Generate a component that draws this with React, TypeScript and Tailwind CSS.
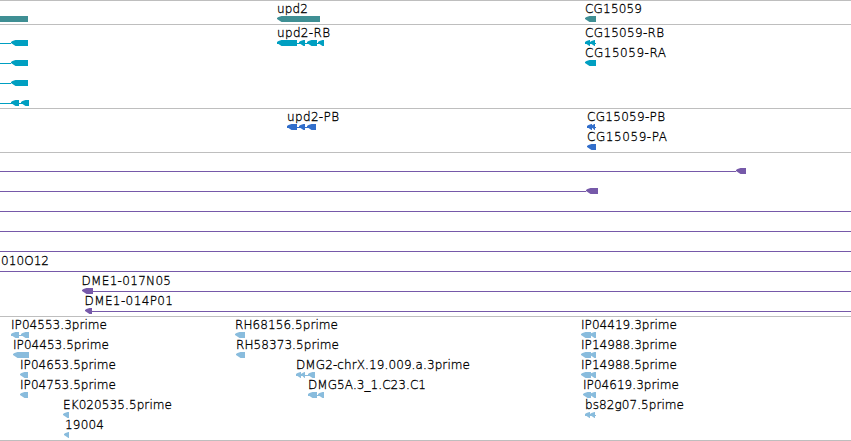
interface Feature {
  row: number
  // exons as [start, end] pairs, every one of them points left
  exons: [number, number][]
  label?: string
  labelX?: number
  labelWidth?: number
  line?: [number, number]
}

interface Track {
  id: string
  color: string
  rows: number
  features: Feature[]
}

const ROW_HEIGHT = 20
const VIEW_WIDTH = 851

const tracks: Track[] = [
  {
    id: 'gene',
    color: '#3f8f94',
    rows: 1,
    features: [
      { row: 0, exons: [[-20, 28]] },
      { row: 0, exons: [[277, 320]], label: 'upd2', labelX: 277, labelWidth: 31 },
      { row: 0, exons: [[585, 596]], label: 'CG15059', labelX: 585, labelWidth: 57 },
    ],
  },
  {
    id: 'mrna',
    color: '#009fc1',
    rows: 4,
    features: [
      { row: 0, exons: [[11, 28]], line: [0, 11] },
      { row: 1, exons: [[11, 28]], line: [0, 11] },
      { row: 2, exons: [[11, 28]], line: [0, 11] },
      { row: 3, exons: [[11, 19], [21, 29]], line: [0, 29] },
      { row: 0, exons: [[277, 297], [299, 305], [307, 317], [318, 324]], line: [277, 324], label: 'upd2-RB', labelX: 277, labelWidth: 53 },
      { row: 0, exons: [[585, 590], [590, 595]], line: [585, 596], label: 'CG15059-RB', labelX: 585, labelWidth: 79 },
      { row: 1, exons: [[585, 596]], label: 'CG15059-RA', labelX: 585, labelWidth: 81 },
    ],
  },
  {
    id: 'cds',
    color: '#316ecb',
    rows: 2,
    features: [
      { row: 0, exons: [[287, 297], [299, 305], [307, 316]], line: [287, 316], label: 'upd2-PB', labelX: 287, labelWidth: 52 },
      { row: 0, exons: [[587, 592], [591, 595]], line: [587, 596], label: 'CG15059-PB', labelX: 587, labelWidth: 78 },
      { row: 1, exons: [[587, 596]], label: 'CG15059-PA', labelX: 587, labelWidth: 80 },
    ],
  },
  {
    id: 'bac',
    color: '#7659a9',
    rows: 8,
    features: [
      { row: 0, exons: [[736, 746]], line: [0, 736] },
      { row: 1, exons: [[586, 598]], line: [0, 586] },
      { row: 2, exons: [], line: [0, VIEW_WIDTH] },
      { row: 3, exons: [], line: [0, VIEW_WIDTH] },
      { row: 4, exons: [], line: [0, VIEW_WIDTH] },
      { row: 5, exons: [], line: [0, VIEW_WIDTH], label: '010O12', labelX: 1, labelWidth: 48 },
      { row: 6, exons: [[82, 93]], line: [93, VIEW_WIDTH], label: 'DME1-017N05', labelX: 81.5, labelWidth: 89.5 },
      { row: 7, exons: [[85, 92]], line: [92, VIEW_WIDTH], label: 'DME1-014P01', labelX: 84.5, labelWidth: 88.5 },
    ],
  },
  {
    id: 'est',
    color: '#89bcdd',
    rows: 6,
    features: [
      { row: 0, exons: [[11, 19], [21, 29]], line: [11, 29], label: 'IP04553.3prime', labelX: 11, labelWidth: 96 },
      { row: 1, exons: [[13, 29]], label: 'IP04453.5prime', labelX: 13, labelWidth: 96 },
      { row: 2, exons: [[20, 28]], label: 'IP04653.5prime', labelX: 20, labelWidth: 96 },
      { row: 3, exons: [[20, 28]], label: 'IP04753.5prime', labelX: 20, labelWidth: 96 },
      { row: 4, exons: [[63, 69]], label: 'EK020535.5prime', labelX: 63, labelWidth: 109 },
      { row: 5, exons: [[64, 69]], label: '19004', labelX: 65, labelWidth: 39 },
      { row: 0, exons: [[235, 245]], label: 'RH68156.5prime', labelX: 235, labelWidth: 103 },
      { row: 1, exons: [[236, 245]], label: 'RH58373.5prime', labelX: 236, labelWidth: 103 },
      { row: 2, exons: [[296, 301], [301, 305], [308, 315]], line: [296, 315], label: 'DMG2-chrX.19.009.a.3prime', labelX: 296, labelWidth: 174 },
      { row: 3, exons: [[308, 317], [318, 324]], line: [308, 324], label: 'DMG5A.3_1.C23.C1', labelX: 308, labelWidth: 118 },
      { row: 0, exons: [[581, 591], [590, 596]], label: 'IP04419.3prime', labelX: 581, labelWidth: 96 },
      { row: 1, exons: [[581, 591], [590, 596]], label: 'IP14988.3prime', labelX: 581, labelWidth: 96 },
      { row: 2, exons: [[581, 591], [590, 596]], label: 'IP14988.5prime', labelX: 581, labelWidth: 96 },
      { row: 3, exons: [[583, 591], [590, 596]], label: 'IP04619.3prime', labelX: 583, labelWidth: 96 },
      { row: 4, exons: [[585, 590], [590, 595]], line: [585, 596], label: 'bs82g07.5prime', labelX: 585, labelWidth: 99 },
    ],
  },
]

function Exon({ start, end, top, color }: { start: number; end: number; top: number; color: string }) {
  const neck = Math.min(start + 5, end)
  return (
    <polygon
      fill={color}
      points={`${start},${top + 2} ${start + 1.5},${top + 1} ${neck - 0.5},${top} ${end},${top} ${end},${top + 6} ${neck - 0.5},${top + 6} ${start + 1.5},${top + 4} ${start},${top + 3}`}
    />
  )
}

function FeatureGlyph({ feature, color }: { feature: Feature; color: string }) {
  const top = feature.row * ROW_HEIGHT
  return (
    <g>
      {feature.line && (
        <rect x={feature.line[0]} y={top + 18} width={feature.line[1] - feature.line[0]} height={1} fill={color} />
      )}
      {feature.exons.map(([start, end]) => (
        <Exon key={start} start={start} end={end} top={top + 15} color={color} />
      ))}
      {feature.label && (
        <text
          x={feature.labelX}
          y={top + 12}
          textLength={feature.labelWidth}
          className="fill-black stroke-black stroke-[0.3px]"
        >
          {feature.label}
        </text>
      )}
    </g>
  )
}

export default function App() {
  return (
    <main className="h-[441px] w-[851px] overflow-hidden border-b border-[#bebebe] bg-white">
      {tracks.map((track) => (
        <section key={track.id} className="border-t border-[#bebebe]">
          <svg
            width={VIEW_WIDTH}
            height={track.rows * ROW_HEIGHT + 3}
            className="block font-['DejaVu_Sans',sans-serif] text-[12px] font-extralight"
          >
            {track.features.map((feature, i) => (
              <FeatureGlyph key={i} feature={feature} color={track.color} />
            ))}
          </svg>
        </section>
      ))}
    </main>
  )
}
